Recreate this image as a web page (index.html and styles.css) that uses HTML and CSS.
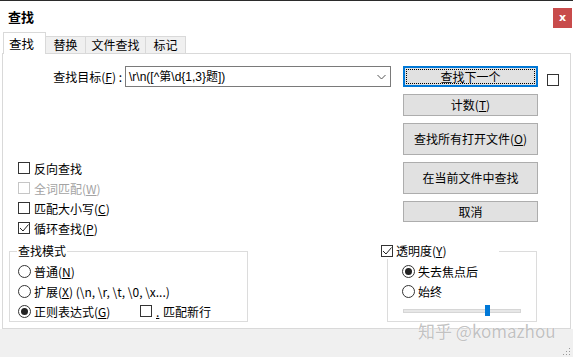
FILE: index.html
```html
<!DOCTYPE html>
<html lang="zh-CN">
<head>
  <meta charset="UTF-8" />
  <title>查找</title>
  <link rel="stylesheet" href="styles.css">
</head>
<body>
  <div class="window">
    <!-- 标题栏 -->
    <div class="titlebar">
      <span class="title">查找</span>
      <span class="close">x</span>
    </div>

    <!-- 标签页 -->
    <div class="tabs">
      <div class="tab active">查找</div>
      <div class="tab">替换</div>
      <div class="tab wide">文件查找</div>
      <div class="tab">标记</div>
    </div>

    <div class="panel">
      <div class="top">
        <div class="left">
          <div class="find-row">
            <label class="find-label">查找目标(<u>F</u>) :</label>
            <div class="combo">
              <span class="combo-text">\r\n([^第\d{1,3}题])</span>
              <svg class="chevron" width="9" height="6" viewBox="0 0 9 6"><path d="M0.5 1 L4.5 5 L8.5 1" fill="none" stroke="#555" stroke-width="1"/></svg>
            </div>
          </div>

          <div class="options">
            <div class="opt"><span class="box"></span>反向查找</div>
            <div class="opt disabled"><span class="box"></span>全词匹配(<u>W</u>)</div>
            <div class="opt"><span class="box"></span>匹配大小写(<u>C</u>)</div>
            <div class="opt"><span class="box checked"><svg width="10" height="10" viewBox="0 0 10 10"><path d="M1 5 L4 8 L9.5 1.5" fill="none" stroke="#222" stroke-width="1"/></svg></span>循环查找(<u>P</u>)</div>
          </div>
        </div>

        <div class="buttons">
          <button class="btn default"><span class="focus">查找下一个</span></button>
          <button class="btn">计数(<u>T</u>)</button>
          <button class="btn tall">查找所有打开文件(<u>O</u>)</button>
          <button class="btn tall">在当前文件中查找</button>
          <button class="btn">取消</button>
        </div>

        <div class="side"><span class="box"></span></div>
      </div>

      <div class="bottom">
        <fieldset class="group mode">
          <legend>查找模式</legend>
          <div class="opt"><span class="radio"></span>普通(<u>N</u>)</div>
          <div class="opt"><span class="radio"></span>扩展(<u>X</u>) (\n, \r, \t, \0, \x...)</div>
          <div class="opt">
            <span class="radio on"></span><span class="regex">正则表达式(<u>G</u>)</span>
            <span class="box"></span><u class="dot">.</u>&nbsp;匹配新行
          </div>
        </fieldset>

        <fieldset class="group trans">
          <legend><span class="box checked"><svg width="10" height="10" viewBox="0 0 10 10"><path d="M1 5 L4 8 L9.5 1.5" fill="none" stroke="#222" stroke-width="1"/></svg></span>透明度(<u>Y</u>)</legend>
          <div class="opt"><span class="radio on"></span>失去焦点后</div>
          <div class="opt"><span class="radio"></span>始终</div>
          <div class="slider">
            <div class="track"><span class="thumb"></span></div>
          </div>
        </fieldset>
      </div>
    </div>

    <div class="footer"></div>

    <div class="watermark">知乎 @komazhou</div>
    <svg class="grip" width="9" height="9" viewBox="0 0 9 9">
      <rect x="7" y="1" width="1" height="1" fill="#999"/>
      <rect x="4" y="4" width="1" height="1" fill="#999"/>
      <rect x="7" y="4" width="1" height="1" fill="#999"/>
      <rect x="1" y="7" width="1" height="1" fill="#999"/>
      <rect x="4" y="7" width="1" height="1" fill="#999"/>
      <rect x="7" y="7" width="1" height="1" fill="#999"/>
    </svg>
  </div>
</body>
</html>
```

FILE: styles.css
```css
* {
  box-sizing: border-box;
  margin: 0;
  padding: 0;
}

body {
  width: 573px;
  height: 357px;
  overflow: hidden;
  background: #f0f0f0;
  font-family: "Noto Sans CJK SC", "Liberation Sans", sans-serif;
  font-size: 12px;
  color: #000;
}

u {
  text-underline-offset: 1px;
}

/*********窗口***********/
.window {
  position: relative;
  width: 573px;
  height: 357px;
  display: flex;
  flex-direction: column;
  background: #fff;
  border-top: 1px solid #2b2b2b;
}

.titlebar {
  height: 31px;
  display: flex;
  align-items: center;
}

.title {
  padding-left: 8px;
  font-size: 13px;
  font-weight: 600;
  line-height: 16px;
}

.close {
  margin-left: auto;
  margin-right: 1px;
  margin-top: 3px;
  width: 19px;
  height: 20px;
  background: #c84b4b;
  color: #fff;
  font-family: "DejaVu Sans", sans-serif;
  font-size: 11px;
  font-weight: bold;
  line-height: 19px;
  text-align: center;
}

/*********标签页***********/
.tabs {
  height: 21px;
  display: flex;
  align-items: flex-end;
  padding-left: 3px;
}

.tab {
  width: 41px;
  height: 17px;
  margin-left: -1px;
  border: 1px solid #d9d9d9;
  border-bottom: none;
  background: #f0f0f0;
  text-align: center;
  line-height: 16px;
}

.tab.wide {
  width: 61px;
}

.tab.active {
  position: relative;
  z-index: 1;
  width: 43px;
  height: 22px;
  margin-left: 0;
  margin-bottom: -1px;
  background: #fff;
  line-height: 22px;
  padding-right: 6px;
  font-size: 12.5px;
}

/*********面板***********/
.panel {
  margin-left: 2px;
  width: 569px;
  height: 276px;
  border: 1px solid #d9d9d9;
  background: #fff;
  display: flex;
  flex-direction: column;
}

.top {
  height: 189px;
  display: flex;
}

.left {
  width: 400px;
}

.find-row {
  margin-top: 12px;
  height: 21px;
  display: flex;
  align-items: center;
}

.find-label {
  width: 119px;
  text-align: right;
  margin-right: 3px;
}

.combo {
  width: 266px;
  height: 21px;
  border: 1px solid #7a7a7a;
  display: flex;
  align-items: center;
  padding-left: 3px;
  padding-right: 4px;
}

.combo-text {
  flex: 1;
  line-height: 18px;
  font-family: "Liberation Sans", "Noto Sans CJK SC", sans-serif;
}

.chevron {
  display: block;
}

.options {
  margin-top: 71px;
  padding-left: 15px;
}

.opt {
  height: 20px;
  display: flex;
  align-items: center;
  white-space: nowrap;
}

.box {
  width: 12px;
  height: 12px;
  border: 1px solid #333;
  background: #fff;
  margin-right: 4px;
  flex-shrink: 0;
  display: inline-flex;
  align-items: center;
  justify-content: center;
}

.opt.disabled {
  color: #a3a3a3;
}

.opt.disabled .box {
  border-color: #c6c6c6;
}

.radio {
  width: 13px;
  height: 13px;
  border: 1px solid #333;
  border-radius: 50%;
  margin-right: 3px;
  flex-shrink: 0;
  display: inline-flex;
  align-items: center;
  justify-content: center;
}

.radio.on::after {
  content: "";
  width: 7px;
  height: 7px;
  border-radius: 50%;
  background: #222;
}

/*********按钮***********/
.buttons {
  width: 135px;
  margin-top: 12px;
  display: flex;
  flex-direction: column;
  gap: 7px;
}

.btn {
  height: 21px;
  background: #e1e1e1;
  border: 1px solid #adadad;
  font-family: inherit;
  font-size: 12px;
  color: #000;
  line-height: 18px;
}

.btn:nth-child(2) {
  height: 22px;
}

.btn.tall {
  height: 32px;
}

.btn.default {
  border-color: #0078d7;
  box-shadow: inset 0 0 0 1px #0078d7;
  padding: 2px;
  display: flex;
}

.btn.default .focus {
  flex: 1;
  border: 1px dotted #000;
  line-height: 13px;
}

.side {
  margin-left: 9px;
  margin-top: 18px;
}

/*********分组***********/
.bottom {
  display: flex;
  align-items: flex-start;
}

.group {
  border: 1px solid #dcdcdc;
  min-width: 0;
}

.group legend {
  line-height: 16px;
  display: flex;
  align-items: center;
}

.mode {
  margin-left: 6px;
  width: 239px;
  padding: 2px 8px 0;
}

.mode legend {
  padding: 0 1px;
  margin-left: -1px;
}

.regex {
  width: 106px;
}

.dot {
  margin-right: 1px;
}

.trans {
  margin-left: 139px;
  width: 150px;
  height: 79px;
  padding: 2px 0 0 14px;
}

.trans legend {
  margin-left: -21px;
  padding-right: 52px;
  background: #fff;
}

.trans legend .box {
  margin-right: 3px;
}

.slider {
  height: 19px;
  display: flex;
  align-items: center;
}

.track {
  position: relative;
  width: 118px;
  height: 4px;
  margin-left: 1px;
  background: #e7e7e7;
  border: 1px solid #d6d6d6;
}

.thumb {
  position: absolute;
  left: 81px;
  top: -5px;
  width: 5px;
  height: 11px;
  background: #0078d7;
}

.footer {
  flex: 1;
  background: #f0f0f0;
}

/*********水印***********/
.watermark {
  position: absolute;
  left: 418px;
  top: 319px;
  font-size: 17px;
  line-height: 21px;
  color: #c2c2c2;
  text-shadow: 0 0 1px #fff, 0 0 1px #fff;
  white-space: nowrap;
}

.grip {
  position: absolute;
  right: 2px;
  bottom: 1px;
}
```
